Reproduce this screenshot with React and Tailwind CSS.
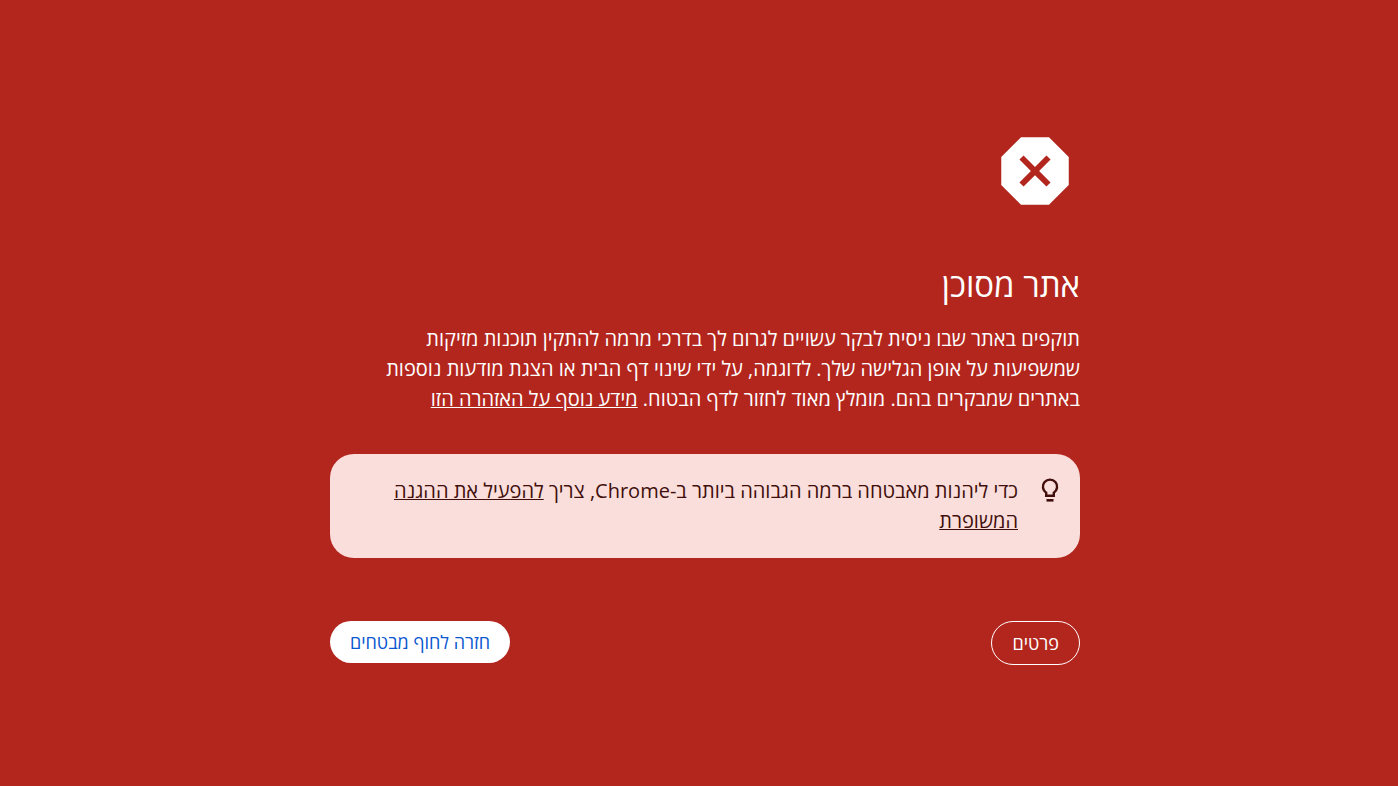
import React from "react";

const DangerIcon = () => (
  <svg viewBox="0 0 24 24" className="h-[90px] w-[90px]" fill="currentColor" aria-hidden="true">
    <path
      fillRule="evenodd"
      d="M8.27 3h7.46L21 8.27v7.46L15.73 21H8.27L3 15.73V8.27L8.27 3ZM8.95 7.85 7.85 8.95 10.9 12l-3.05 3.05 1.1 1.1L12 13.1l3.05 3.05 1.1-1.1L13.1 12l3.05-3.05-1.1-1.1L12 10.9 8.95 7.85Z"
    />
  </svg>
);

const BulbIcon = () => (
  <svg viewBox="0 0 20 30" className="h-[30px] w-5 shrink-0" aria-hidden="true">
    <path
      d="M6.2 19.8v-3.1A7.1 7.1 0 1 1 13.8 16.7v3.1Z"
      fill="none"
      stroke="currentColor"
      strokeWidth="2.4"
    />
    <path d="M6.5 23h7v2.6h-7z" fill="currentColor" />
  </svg>
);

const App = () => {
  return (
    <main
      dir="rtl"
      lang="he"
      className="min-h-screen bg-[#b3261e] pt-[126px] pl-3 pb-10 font-['Open_Sans','Noto_Sans',sans-serif] text-white"
    >
      <div className="mx-auto w-full max-w-[750px]">
        <DangerIcon />
        <h1 className="mt-12 text-[33px] leading-[42px]">אתר מסוכן</h1>
        <p className="mt-[18px] max-w-[710px] text-xl leading-[30px]">
          תוקפים באתר שבו ניסית לבקר עשויים לגרום לך בדרכי מרמה להתקין תוכנות מזיקות
          שמשפיעות על אופן הגלישה שלך. לדוגמה, על ידי שינוי דף הבית או הצגת מודעות נוספות
          באתרים שמבקרים בהם. מומלץ מאוד לחזור לדף הבטוח.{" "}
          <a href="#more" className="underline decoration-1">
            מידע נוסף על האזהרה הזו
          </a>
        </p>
        <div className="mt-10 flex gap-[22px] rounded-3xl bg-[#f9dedc] px-5 py-[22px] text-[#410e0b]">
          <BulbIcon />
          <p className="text-xl leading-[30px]">
            כדי ליהנות מאבטחה ברמה הגבוהה ביותר ב-Chrome, צריך{" "}
            <a href="#protection" className="underline decoration-1">
              להפעיל את ההגנה המשופרת
            </a>
          </p>
        </div>
        <div className="mt-[63px] flex items-start justify-between text-lg">
          <button type="button" className="h-11 rounded-full border border-white px-5">
            פרטים
          </button>
          <button type="button" className="h-[42px] rounded-full bg-white px-5 text-[#0b57d0]">
            חזרה לחוף מבטחים
          </button>
        </div>
      </div>
    </main>
  );
};

export default App;
